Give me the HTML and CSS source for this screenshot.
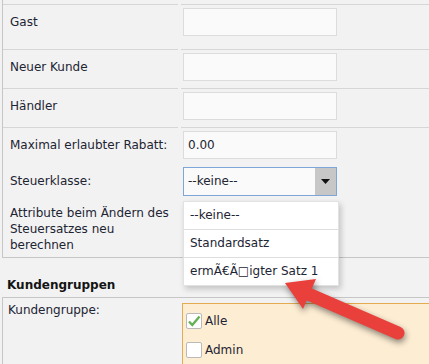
FILE: index.html
```html
<!DOCTYPE html>
<html>
<head>
  <title>Kundengruppe bearbeiten</title>
  <link rel="stylesheet" href="styles.css">
</head>
<body>
  <div class="page">

    <div class="box">
      <div class="row lined first">
        <div class="label">Gast</div>
        <div class="field"><input class="text" type="text"></div>
      </div>
      <div class="row lined">
        <div class="label">Neuer Kunde</div>
        <div class="field"><input class="text" type="text"></div>
      </div>
      <div class="row lined">
        <div class="label">Händler</div>
        <div class="field"><input class="text" type="text"></div>
      </div>
      <div class="row lined rabatt">
        <div class="label">Maximal erlaubter Rabatt:</div>
        <div class="field"><input class="text" type="text" value="0.00"></div>
      </div>
      <div class="row steuer">
        <div class="label">Steuerklasse:</div>
        <div class="field">
          <div class="select focus">
            <span class="select-value">--keine--</span>
            <span class="select-btn">
              <svg width="9" height="5" viewBox="0 0 9 5"><path d="M0 0H9L4.5 5Z" fill="#111"/></svg>
            </span>
          </div>
        </div>
      </div>
      <div class="row attr">
        <div class="label">Attribute beim Ändern des Steuersatzes neu berechnen</div>
        <div class="field">
          <!-- covered by the open dropdown -->
          <div class="select"></div>
        </div>
      </div>
    </div>

    <div class="section-title">Kundengruppen</div>

    <div class="box2">
      <div class="label2">Kundengruppe:</div>
      <div class="groups">
        <div class="check-item">
          <span class="checkbox">
            <svg width="14" height="14" viewBox="0 0 14 14"><path d="M2 7.5L5.3 11L12.5 2.5" fill="none" stroke="#64b254" stroke-width="2.4"/></svg>
          </span>
          <span>Alle</span>
        </div>
        <div class="check-item">
          <span class="checkbox"></span>
          <span>Admin</span>
        </div>
      </div>
    </div>

    <!-- open dropdown of the Steuerklasse select -->
    <ul class="dropdown">
      <li>--keine--</li>
      <li>Standardsatz</li>
      <li>ermÃ€Ã□igter Satz 1</li>
    </ul>

    <svg class="arrow" width="429" height="364" viewBox="0 0 429 364">
      <g fill="#e9403c">
        <line x1="306" y1="293" x2="398" y2="333" stroke="#e9403c" stroke-width="13" stroke-linecap="round"/>
        <polygon points="285,283 316,279 303,309"/>
      </g>
    </svg>

  </div>
</body>
</html>
```

FILE: styles.css
```css
body {
  margin: 0;
  background: #f2f2f2;
  font-family: "DejaVu Sans", Verdana, sans-serif;
  font-size: 12px;
  color: #1d2432;
}

.page {
  position: relative;
  height: 364px;
  overflow: hidden;
}

.box {
  margin-left: 2px;
  padding-top: 4px;
  border-left: 1px solid #c6c6c6;
  border-bottom: 1px solid #c6c6c6;
}

.row {
  display: grid;
  grid-template-columns: 175px 1fr;
  column-gap: 3px;
}

.row > div {
  padding-top: 3px;
  padding-bottom: 7px;
}

.row.lined > div {
  border-top: 1px solid #d6d6d6;
}

.row.first > div {
  padding-bottom: 13px;
}

.row.rabatt > div {
  padding-bottom: 0;
}

.row.steuer > div {
  padding-top: 8px;
  padding-bottom: 0;
}

.row.attr > div {
  padding-top: 9px;
  padding-bottom: 4px;
}

.label {
  padding-left: 7px;
  line-height: 28px;
}

.row.steuer .label {
  line-height: 29px;
}

.row.attr .label {
  line-height: 16px;
}

.field {
  padding-left: 2px;
}

.text {
  display: block;
  box-sizing: border-box;
  width: 154px;
  height: 28px;
  margin: 0;
  padding: 0 4px;
  border: 1px solid #dcdcdc;
  background: #fafafa;
  font-family: inherit;
  font-size: 12px;
  color: #1d2432;
  outline: none;
}

.select {
  display: flex;
  box-sizing: border-box;
  width: 154px;
  height: 29px;
  border: 1px solid #dcdcdc;
  background: #fafafa;
}

.select.focus {
  border-color: #7fa6d8;
}

.select-value {
  flex: 1;
  padding-left: 4px;
  line-height: 27px;
}

.select-btn {
  display: flex;
  align-items: center;
  justify-content: center;
  width: 21px;
  background: #c7c7c7;
}

.section-title {
  margin: 19px 0 4px 7px;
  font-weight: bold;
  line-height: 16px;
  color: #141414;
}

.box2 {
  display: grid;
  grid-template-columns: 175px 1fr;
  column-gap: 3px;
  margin-left: 2px;
  border-left: 1px solid #c6c6c6;
  border-top: 1px solid #c6c6c6;
  height: 80px;
}

.label2 {
  padding: 4px 0 0 5px;
  line-height: 16px;
}

.groups {
  margin: 5px 0 0 1px;
  padding: 2px 0 0 3px;
  border: 1px solid #e4ab50;
  border-right: none;
  background: #fdedd3;
}

.check-item {
  display: flex;
  align-items: center;
  gap: 3px;
  height: 29px;
}

.checkbox {
  display: flex;
  align-items: center;
  justify-content: center;
  box-sizing: border-box;
  width: 16px;
  height: 16px;
  border: 1px solid #bababa;
  border-radius: 2px;
  background: #fff;
}

.dropdown {
  position: absolute;
  left: 183px;
  top: 201px;
  width: 154px;
  margin: 0;
  padding: 0;
  list-style: none;
  background: #fff;
  border: 1px solid #e2e2e2;
  box-shadow: 2px 3px 6px rgba(0, 0, 0, 0.2);
}

.dropdown li {
  height: 27px;
  padding-left: 6px;
  line-height: 27px;
  border-bottom: 1px solid #dedede;
}

.dropdown li:last-child {
  border-bottom: none;
}

.arrow {
  position: absolute;
  left: 0;
  top: 0;
  pointer-events: none;
  filter: drop-shadow(1px 3px 3px rgba(0, 0, 0, 0.45));
}
```
